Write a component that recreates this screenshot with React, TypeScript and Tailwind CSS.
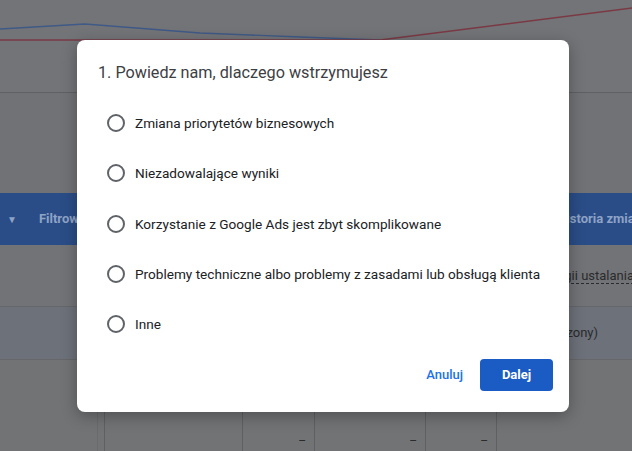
import React from "react";

const options = [
  "Zmiana priorytetów biznesowych",
  "Niezadowalające wyniki",
  "Korzystanie z Google Ads jest zbyt skomplikowane",
  "Problemy techniczne albo problemy z zasadami lub obsługą klienta",
  "Inne",
];

export default function App() {
  return (
    <div className="relative w-[632px] h-[451px] overflow-hidden bg-[#737477]" style={{ fontFamily: "Roboto, 'Liberation Sans', sans-serif" }}>
      {/* background page (dimmed) */}
      <div className="flex flex-col w-full h-full">
        <div className="relative h-[93px] bg-[#737477] border-b border-[#5f6063]">
          <svg className="absolute inset-0" width="632" height="93" viewBox="0 0 632 93">
            <polyline points="0,29 85,24 200,33 300,37 380,40" fill="none" stroke="#3f5a86" strokeWidth="1.3" />
            <polyline points="0,40 120,40 380,40 632,8" fill="none" stroke="#7a3a45" strokeWidth="1.3" />
          </svg>
        </div>
        <div className="h-[100px] bg-[#717275]" />
        <div className="h-[52px] bg-[#2a4d87] flex items-center text-[#8ea3c6] font-bold text-[13px] overflow-hidden whitespace-nowrap">
          <span className="ml-[7px] text-[10px] text-[#8ea3c6]">▼</span>
          <span className="ml-[22px]">Filtrowanie</span>
          <span className="ml-auto mr-[-10px]">Historia zmian</span>
        </div>
        <div className="h-[62px] bg-[#727376] border-b border-[#66676a] flex items-center justify-end text-[13px] text-[#2a2b2d] overflow-hidden whitespace-nowrap">
          <span className="border-b border-dashed border-[#2a2b2d] mr-[-2px] leading-[15px]">strategii ustalania</span>
        </div>
        <div className="h-[53px] bg-[#6d7179] border-b border-[#66676a] flex items-center justify-end text-[13px] text-[#2a2b2d]">
          <span className="mr-[34px]">(ograniczony)</span>
        </div>
        <div className="flex-1 flex bg-[#727375]">
          <div className="w-[98px] border-r border-[#6a6b6d]" />
          <div className="w-[7px] border-r border-[#5f6063]" />
          <div className="w-[138px] border-r border-[#5f6063]" />
          <div className="w-[72px] border-r border-[#5f6063] flex items-end justify-end pb-[1px] pr-[8px] text-[#2a2b2d] text-[12px]">–</div>
          <div className="w-[111px] border-r border-[#5f6063] flex items-end justify-end pb-[1px] pr-[8px] text-[#2a2b2d] text-[12px]">–</div>
          <div className="w-[71px] border-r border-[#5f6063] flex items-end justify-end pb-[1px] pr-[8px] text-[#2a2b2d] text-[12px]">–</div>
          <div className="flex-1" />
        </div>
      </div>

      {/* dialog */}
      <div className="absolute left-[77px] top-[40px] w-[492px] h-[372px] bg-white rounded-[8px] shadow-[0_4px_16px_rgba(0,0,0,0.3)] flex flex-col">
        <div className="pl-[21px] pt-[23px] text-[16.2px] text-[#3c4043] leading-[20px] whitespace-nowrap">1. Powiedz nam, dlaczego wstrzymujesz</div>
        <div className="flex flex-col mt-[15px] pl-[30px]">
          {options.map((o) => (
            <div key={o} className="flex items-center h-[50.3px]">
              <span className="w-[18px] h-[18px] rounded-full border-2 border-[#5f6368] shrink-0" />
              <span className="ml-[10px] text-[13.6px] text-[#202124] whitespace-nowrap">{o}</span>
            </div>
          ))}
        </div>
        <div className="mt-auto mb-[21px] mr-[16px] flex items-center justify-end">
          <span className="text-[13px] font-medium text-[#1a73e8] mr-[17px]">Anuluj</span>
          <button className="w-[73px] h-[32px] rounded-[4px] bg-[#1a5cc4] text-white text-[13px] font-bold">Dalej</button>
        </div>
      </div>
    </div>
  );
}
